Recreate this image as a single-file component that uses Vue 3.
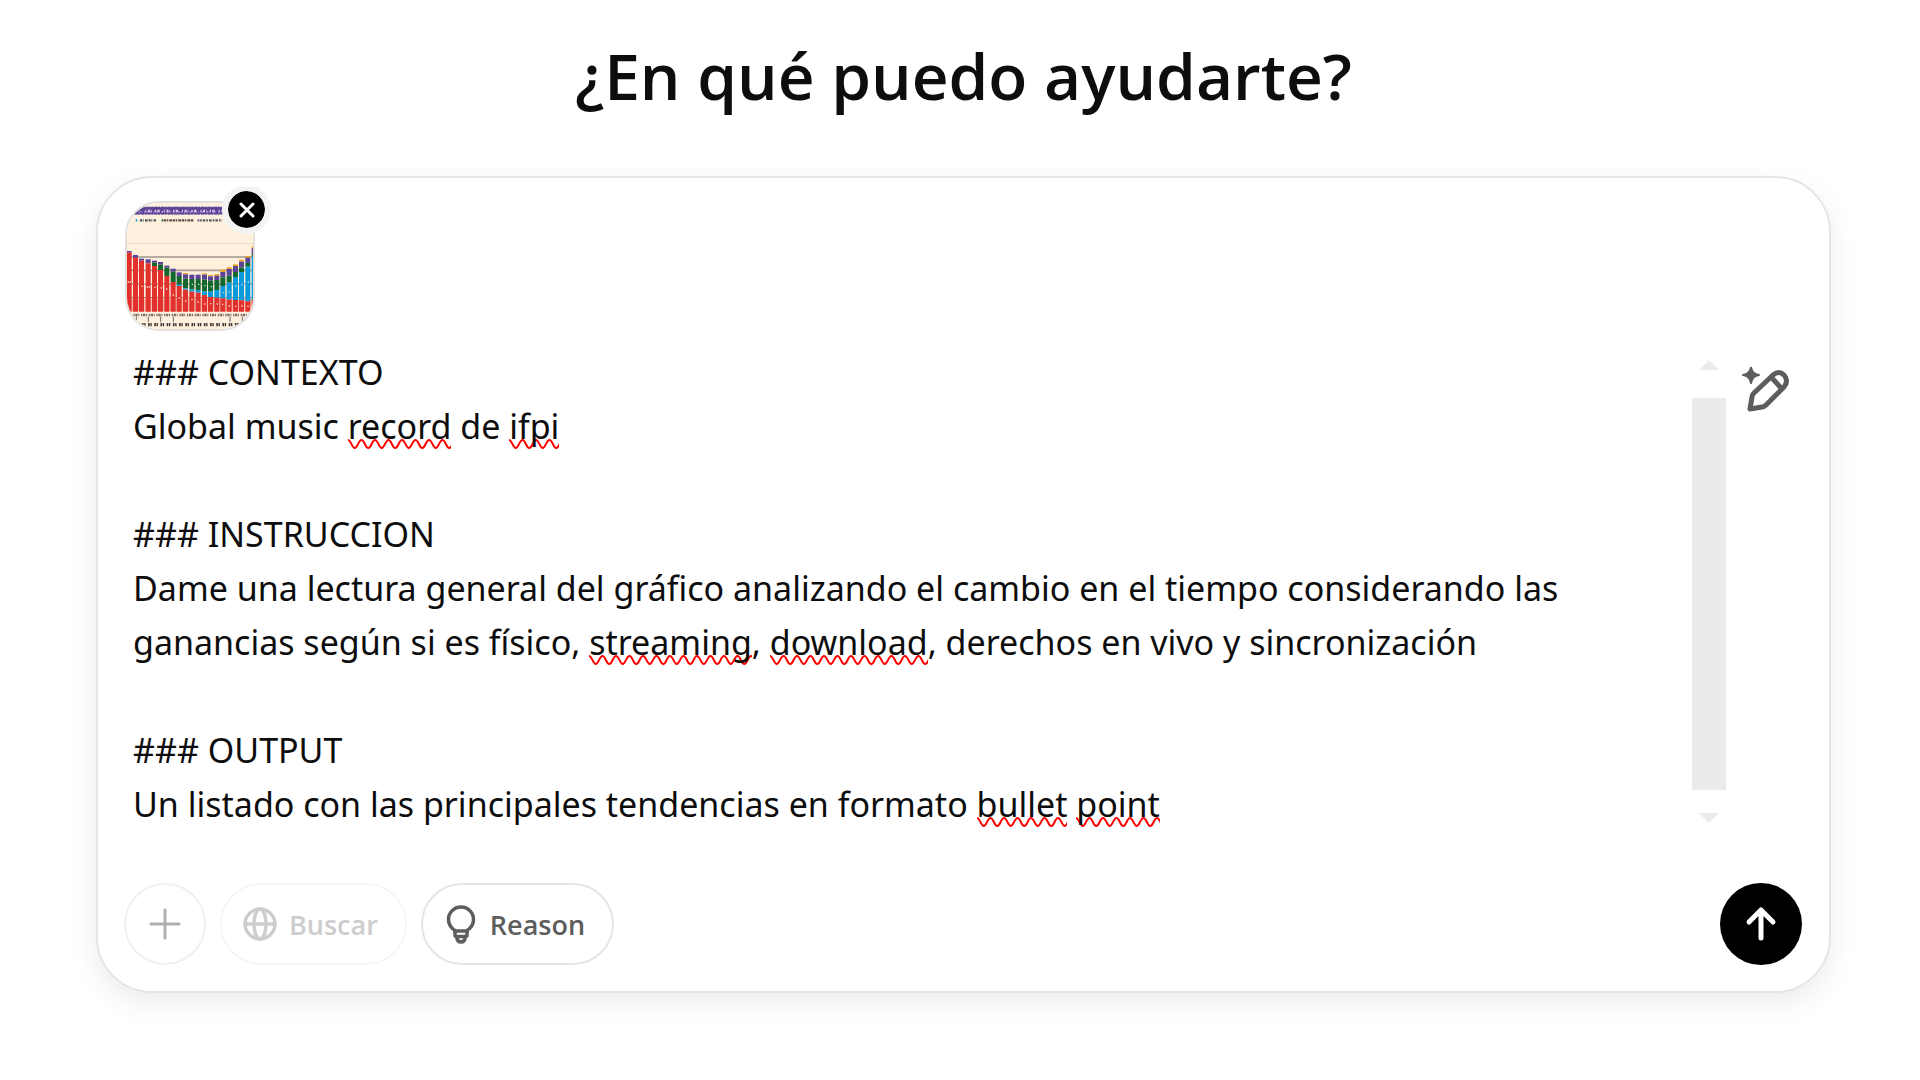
<script setup>
import { ref } from 'vue'

const title = '¿En qué puedo ayudarte?'

// Each line of the prompt is a list of runs; `miss` marks a word the spell checker underlines.
const lines = [
  [{ t: '### CONTEXTO' }],
  [{ t: 'Global music ' }, { t: 'record', miss: true }, { t: ' de ' }, { t: 'ifpi', miss: true }],
  [],
  [{ t: '### INSTRUCCION' }],
  [
    { t: 'Dame una lectura general del gráfico analizando el cambio en el tiempo considerando las ' },
    { t: 'ganancias según si es físico, ' },
    { t: 'streaming', miss: true },
    { t: ', ' },
    { t: 'download', miss: true },
    { t: ', derechos en vivo y sincronización' },
  ],
  [],
  [{ t: '### OUTPUT' }],
  [
    { t: 'Un listado con las principales tendencias en formato ' },
    { t: 'bullet', miss: true },
    { t: ' ' },
    { t: 'point', miss: true },
  ],
]

// Stacked bars: x, then the tops of orange, purple, green, blue and red.
const bars = [
  [140, 271, 271, 276, 276, 276],
  [159, 283, 283, 291, 291, 291],
  [177, 294, 294, 300, 300, 300],
  [197, 296, 296, 308, 308, 308],
  [216, 300, 300, 306, 316, 316],
  [234, 304, 304, 312, 328, 328],
  [253, 315, 315, 321, 346, 346],
  [272, 324, 324, 333, 364, 364],
  [290, 335, 335, 346, 372, 376],
  [309, 337, 341, 354, 383, 387],
  [328, 342, 342, 355, 386, 393],
  [347, 342, 342, 355, 388, 396],
  [366, 338, 342, 357, 392, 403],
  [384, 343, 347, 360, 393, 409],
  [403, 340, 345, 358, 388, 411],
  [421, 327, 334, 350, 376, 413],
  [440, 320, 325, 345, 366, 417],
  [459, 311, 316, 334, 349, 418],
  [477, 297, 303, 321, 334, 419],
  [496, 286, 291, 307, 318, 422],
  [515, 257, 262, 282, 288, 418],
]
const colors = ['#f0a51e', '#5b4397', '#12682f', '#0a9bdc', '#e2302d']
const segments = bars.flatMap(([x, ...tops]) =>
  tops
    .map((y, i) => ({ x, y, h: (tops[i + 1] ?? 453) - y, fill: colors[i] }))
    .filter((s) => s.h > 0),
)

const attached = ref(true)
</script>

<template>
  <main class="page">
    <h1 class="title">{{ title }}</h1>

    <form class="composer" @submit.prevent>
      <div v-if="attached" class="attachments">
        <div class="attachment">
          <svg class="chart" viewBox="141 127 378 378" role="img" aria-label="Gráfico adjunto">
            <rect x="135" y="121" width="390" height="390" fill="#fff0de" />
            <rect x="160" y="138" width="268" height="24" fill="#5b4397" />
            <g fill="none" stroke="#fff0de">
              <path d="M160 138H428M160 162H428" stroke-width="3" stroke-dasharray="3 9 2 6" />
              <path d="M196 151H428" stroke="#d9cdea" stroke-width="8" stroke-dasharray="3 5 6 3 2 9 4 4 7 12" />
              <path d="M176 154H420" stroke="#b9a5d4" stroke-width="4" stroke-dasharray="5 4 2 6" />
            </g>
            <g fill="none" stroke-width="7">
              <path d="M180 179H228" stroke="#45545a" stroke-dasharray="6 2 3 4 8 3" />
              <path d="M252 179H342" stroke="#5a4f4a" stroke-dasharray="7 2 4 3 9 2" />
              <path d="M360 179H426" stroke="#5f5a68" stroke-dasharray="5 3 8 3" />
              <path d="M167 179h5" stroke="#0a9bdc" />
              <path d="M245 179h5" stroke="#12682f" />
              <path d="M353 179h5" stroke="#5b4397" />
            </g>
            <path d="M138 248H522" stroke="#eadccb" stroke-width="3" />
            <path d="M138 289H522" stroke="#6d6864" stroke-width="3" />
            <path d="M138 329H522" stroke="#aaa096" stroke-width="5" />
            <path d="M138 370H522M138 411H522" stroke="#81796f" stroke-width="3" />
            <rect x="138" y="414" width="384" height="39" fill="#f6b9a6" />
            <rect v-for="(s, i) in segments" :key="i" :x="s.x" :y="s.y" width="15" :height="s.h" :fill="s.fill" />
            <g fill="none" stroke="#ffd9cf" stroke-width="4">
              <path d="M143 364h11M185 377h6M200 379h12M223 380h6M242 382h4M258 385h4" stroke-dasharray="4 2" />
              <path d="M278 403h4M296 412h5M315 421h4M334 417h5M352 424h4M372 430h5M390 429h4M410 430h4M426 431h5M446 436h4M465 437h4M484 436h5M502 437h7" stroke-dasharray="4 2" />
              <path d="M428 396h5M446 394h5M465 376h6M484 372h4M503 364h6M335 371h5M354 371h5M373 375h5M392 378h5" stroke="#b8dcd8" stroke-dasharray="4 2" />
            </g>
            <path d="M160 463H520" stroke="#77706a" stroke-width="7" stroke-dasharray="4 2 7 2 3 5" />
            <path d="M169 468v16M205 468v16M242 468v16M280 468v16M450 468v16M487 468v16" stroke="#6d6864" stroke-width="3" />
            <path d="M167 492H510" stroke="#3f3a37" stroke-width="10" stroke-dasharray="5 2 4 7.6" />
          </svg>
        </div>
        <button class="remove" type="button" aria-label="Quitar archivo" @click="attached = false">
          <svg viewBox="0 0 16 16" width="16" height="16" fill="none" stroke="#fff" stroke-width="3" stroke-linecap="round">
            <path d="M2 2l12 12M14 2L2 14" />
          </svg>
        </button>
      </div>

      <div class="body">
        <div class="prompt" contenteditable="true" role="textbox" aria-multiline="true" aria-label="Mensaje" spellcheck="false">
          <p v-for="(line, i) in lines" :key="i"><template v-for="(run, j) in line" :key="j"><span v-if="run.miss" class="misspelled">{{ run.t }}</span><template v-else>{{ run.t }}</template></template><br v-if="!line.length" /></p>
        </div>
        <div class="scrollbar" aria-hidden="true">
          <svg viewBox="0 0 20 10" width="20" height="10"><path d="M0 10L10 0l10 10z" fill="#ebebeb" /></svg>
          <span class="thumb"></span>
          <svg viewBox="0 0 20 10" width="20" height="10"><path d="M0 0h20L10 10z" fill="#ebebeb" /></svg>
        </div>
        <button class="improve" type="button" aria-label="Mejorar mensaje">
          <svg viewBox="0 0 48 46" width="48" height="46" fill="none" stroke="#5d5d5d" stroke-width="5" stroke-linejoin="round">
            <path d="M8 42L10 30Q10 28 12 26L31 8Q37 3 42 8Q47 14 42 20L24 38Q22 40 20 40Z" />
            <path d="M29 10L40 22" />
            <path d="M9 0Q10 7 17 8Q10 9 9 16Q8 9 1 8Q8 7 9 0Z" fill="#5d5d5d" stroke="#5d5d5d" stroke-width="2" />
          </svg>
        </button>
      </div>

      <div class="toolbar">
        <button class="tool round" type="button" aria-label="Adjuntar" disabled>
          <svg viewBox="0 0 32 32" width="32" height="32" fill="none" stroke="#afafaf" stroke-width="3" stroke-linecap="round">
            <path d="M16 2v28M2 16h28" />
          </svg>
        </button>
        <button class="tool search" type="button" disabled>
          <svg viewBox="0 0 34 34" width="34" height="34" fill="none" stroke="#cdcdcd" stroke-width="3.5">
            <circle cx="17" cy="17" r="15" />
            <ellipse cx="17" cy="17" rx="6" ry="15" />
            <path d="M2 17h30" />
          </svg>
          <span>Buscar</span>
        </button>
        <button class="tool reason" type="button">
          <svg viewBox="0 0 34 40" width="34" height="40" fill="none" stroke="#5d5d5d" stroke-width="3.5">
            <path d="M11 27Q11 26 9 25A12.5 12.5 0 1 1 25 25Q23 26 23 27Z" />
            <path d="M11 27V31Q11 32.500 12.500 32.500H21.500Q23 32.500 23 31V27M12.500 32Q13 38 17 38T21.500 32" />
          </svg>
          <span>Reason</span>
        </button>
        <button class="send" type="submit" aria-label="Enviar">
          <svg viewBox="0 0 34 36" width="34" height="36" fill="none" stroke="#fff" stroke-width="5" stroke-linecap="round" stroke-linejoin="round">
            <path d="M17 32V4M5 16L17 4l12 12" />
          </svg>
        </button>
      </div>
    </form>
  </main>
</template>

<style>
body {
  margin: 0;
  background: #fff;
}
</style>

<style scoped>
.page {
  padding: 28px 89px 88px 96px;
  color: #0d0d0d;
  font-family: "Segoe UI", "Open Sans", "Noto Sans", sans-serif;
}

.title {
  margin: 0 0 52px;
  font-size: 64px;
  font-weight: 600;
  line-height: 96px;
  text-align: center;
}

.composer {
  padding: 9px 27px 26px 26px;
  border: 2px solid #e5e5e5;
  border-radius: 56px;
  background: #fff;
  box-shadow: 0 10px 28px rgba(0, 0, 0, 0.08);
}

.attachments {
  position: relative;
  height: 158px;
  padding: 14px 0 0 1px;
  box-sizing: border-box;
  overflow: hidden;
}

.attachment {
  width: 130px;
  height: 130px;
  box-sizing: border-box;
  border: 2px solid #e3e0de;
  border-radius: 34px;
  overflow: hidden;
}

.chart {
  display: block;
  width: 100%;
  height: 100%;
}

.remove {
  position: absolute;
  top: -2px;
  left: 98px;
  display: grid;
  place-items: center;
  width: 49px;
  height: 49px;
  padding: 0;
  border: 6px solid #f3f3f3;
  border-radius: 50%;
  background: #000;
  background-clip: padding-box;
}

.body {
  display: flex;
  align-items: flex-start;
}

.prompt {
  flex: 1;
  min-width: 0;
  height: 493px;
  padding: 0 80px 0 9px;
  overflow: hidden;
  box-sizing: border-box;
  outline: none;
  font-family: "Segoe UI", "Noto Sans", "Open Sans", sans-serif;
  font-size: 34px;
  line-height: 54px;
}

.prompt p {
  margin: 0;
}

.misspelled {
  background: url("data:image/svg+xml,%3Csvg xmlns='http://www.w3.org/2000/svg' viewBox='0 0 27 10' width='27' height='10'%3E%3Cpath d='M0 1C3 1 4 9 6.75 9S10.5 1 13.5 1S17.25 9 20.25 9S24 1 27 1' fill='none' stroke='red' stroke-width='2'/%3E%3C/svg%3E") left bottom / 27px 10px repeat-x;
}

.scrollbar {
  display: flex;
  flex-direction: column;
  align-items: center;
  width: 34px;
  height: 493px;
  padding: 15px 0;
  box-sizing: border-box;
}

.thumb {
  flex: 1;
  width: 34px;
  margin: 28px 0 23px;
  background: #ebebeb;
}

.improve {
  margin: 22px 12px 0 16px;
  padding: 0;
  border: 0;
  background: none;
}

.improve svg {
  display: block;
}

.toolbar {
  display: flex;
  gap: 14px;
  margin-top: 45px;
}

.tool {
  display: flex;
  align-items: center;
  gap: 12px;
  height: 82px;
  padding: 0 27px 0 21px;
  box-sizing: border-box;
  border: 2px solid #e5e5e5;
  border-radius: 41px;
  background: #fff;
  color: #5d5d5d;
  font-family: inherit;
  font-size: 27px;
  font-weight: 600;
}

.round {
  justify-content: center;
  width: 82px;
  padding: 0;
  border-color: #f0f0f0;
}

.search {
  border-color: #f6f6f6;
  color: #cdcdcd;
}

.send {
  display: grid;
  place-items: center;
  width: 82px;
  height: 82px;
  margin-left: auto;
  padding: 0;
  border: 0;
  border-radius: 50%;
  background: #000;
}
</style>
